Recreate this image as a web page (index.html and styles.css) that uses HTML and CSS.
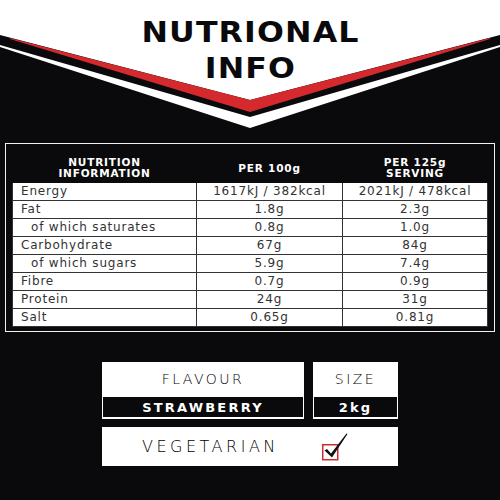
FILE: index.html
```html
<!DOCTYPE html>
<html lang="en">
<head>
    <meta charset="UTF-8">
    <meta name="viewport" content="width=device-width, initial-scale=1.0">
    <title>Nutritional Info</title>
    <link rel="stylesheet" href="styles.css">
</head>
<body>
    <header class="top">
        <svg class="chevron" viewBox="0 0 500 140" preserveAspectRatio="none">
            <polygon fill="#0a0a0c" points="0,35 250,100 500,35 500,140 0,140"/>
            <polygon fill="#d42a2e" points="10,38 250,100 490,38 490,39 250,112 10,39"/>
            <polygon fill="#ffffff" points="0,45 250,117 500,45 500,47 250,128 0,47"/>
        </svg>
        <h1 class="title">NUTRIONAL<br>INFO</h1>
    </header>

    <div class="frame">
        <table class="facts">
            <thead>
                <tr>
                    <th class="col-name">NUTRITION<br>INFORMATION</th>
                    <th class="col-100">PER 100g</th>
                    <th class="col-serv">PER 125g<br>SERVING</th>
                </tr>
            </thead>
            <tbody>
                <tr><td>Energy</td><td>1617kJ / 382kcal</td><td>2021kJ / 478kcal</td></tr>
                <tr><td>Fat</td><td>1.8g</td><td>2.3g</td></tr>
                <tr><td class="sub">of which saturates</td><td>0.8g</td><td>1.0g</td></tr>
                <tr><td>Carbohydrate</td><td>67g</td><td>84g</td></tr>
                <tr><td class="sub">of which sugars</td><td>5.9g</td><td>7.4g</td></tr>
                <tr><td>Fibre</td><td>0.7g</td><td>0.9g</td></tr>
                <tr><td>Protein</td><td>24g</td><td>31g</td></tr>
                <tr><td>Salt</td><td>0.65g</td><td>0.81g</td></tr>
            </tbody>
        </table>
    </div>

    <div class="extras">
        <div class="spec">
            <div class="spec-label">FLAVOUR</div>
            <div class="spec-value">STRAWBERRY</div>
        </div>
        <div class="spec">
            <div class="spec-label">SIZE</div>
            <div class="spec-value">2kg</div>
        </div>
        <div class="veg">
            <span class="veg-label">VEGETARIAN</span>
            <svg class="tick" width="30" height="30" viewBox="0 0 30 30">
                <rect x="2.75" y="12.75" width="15" height="15" fill="none" stroke="#d42a2e" stroke-width="1.5"/>
                <path d="M4.5 18.5 L7 17 L11 21.5 L26.5 1.5 L27.5 2 L12 25.5 Z" fill="#111"/>
            </svg>
        </div>
    </div>
</body>
</html>
```

FILE: styles.css
```css
body {
    margin: 0;
    background-color: #0a0a0c;
    font-family: "DejaVu Sans", sans-serif;
    color: #2a2a2a;
}
.top {
    position: relative;
    height: 140px;
    background-color: #ffffff;
}
.chevron {
    position: absolute;
    left: 0;
    top: 0;
    width: 500px;
    height: 140px;
}
.title {
    position: relative;
    width: max-content;
    margin: 0 auto;
    padding-top: 15px;
    font-size: 28px;
    line-height: 36px;
    font-weight: bold;
    letter-spacing: 1px;
    text-align: center;
    color: #0a0a0c;
    transform: scaleX(1.13);
}
.frame {
    margin: 3px 5px 0;
    border: 1px solid #f0f0f0;
    padding: 9px 6px 4px;
}
.facts {
    width: 100%;
    border-collapse: collapse;
    background-color: #ffffff;
    table-layout: fixed;
}
.facts th {
    height: 28px;
    padding: 0;
    background-color: #0a0a0c;
    color: #ffffff;
    font-size: 10.5px;
    line-height: 11px;
    letter-spacing: 0.8px;
    border: 1px solid #0a0a0c;
}
.col-name {
    width: 183px;
}
.col-100 {
    width: 145px;
}
.facts td {
    height: 17px;
    padding: 0;
    border: 1px solid #333333;
    font-size: 12px;
    line-height: 17px;
    letter-spacing: 0.8px;
    text-align: center;
    color: #333333;
}
.facts td:first-child {
    text-align: left;
    padding-left: 8px;
}
.facts td.sub {
    padding-left: 18px;
}
.extras {
    display: grid;
    grid-template-columns: 202px 85px;
    column-gap: 9px;
    row-gap: 8px;
    width: 296px;
    margin: 30px 0 0 102px;
}
.spec {
    display: flex;
    flex-direction: column;
    height: 57px;
    padding: 0 1px 2px;
    box-sizing: border-box;
    background-color: #ffffff;
}
.spec-label {
    flex: 1;
    display: flex;
    align-items: center;
    justify-content: center;
    padding-bottom: 2px;
    font-size: 14px;
    font-weight: 200;
    letter-spacing: 2.5px;
    color: #000000;
}
.spec-value {
    height: 20px;
    line-height: 21px;
    background-color: #0a0a0c;
    color: #ffffff;
    text-align: center;
    font-size: 13px;
    font-weight: bold;
    letter-spacing: 2.2px;
}
.veg {
    grid-column: 1 / -1;
    display: flex;
    align-items: center;
    height: 39px;
    padding-left: 40px;
    background-color: #ffffff;
}
.veg-label {
    font-size: 16px;
    font-weight: 200;
    letter-spacing: 3.5px;
    color: #000000;
}
.tick {
    margin-left: 41px;
}
```
